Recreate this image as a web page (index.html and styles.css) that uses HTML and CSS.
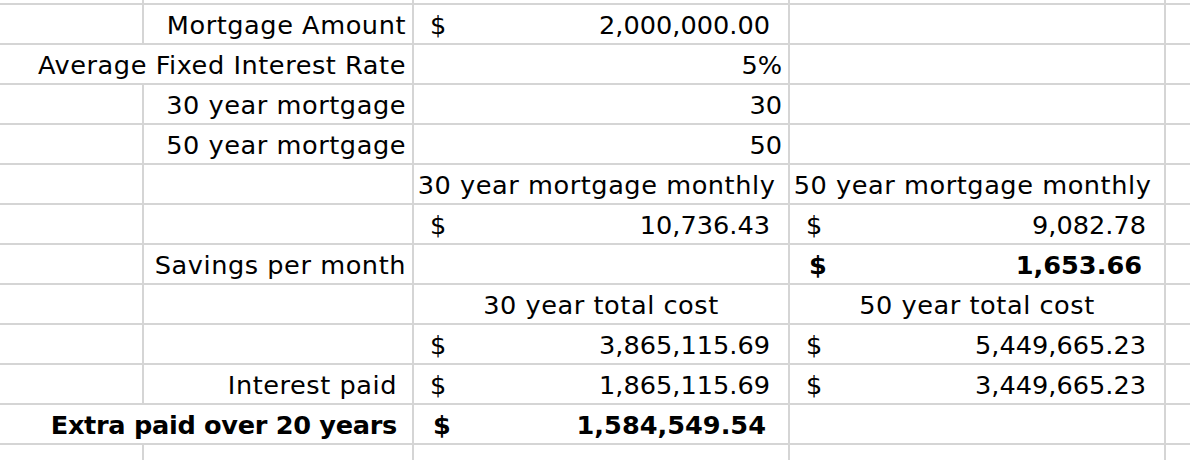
FILE: index.html
```html
<!DOCTYPE html>
<html>
<head>
<meta charset="utf-8">
<link rel="stylesheet" href="styles.css">
</head>
<body>
<div class="sheet">
  <div class="cell top"></div><div class="cell top"></div><div class="cell top"></div><div class="cell top"></div><div class="cell top last"></div>

  <div class="cell"></div>
  <div class="cell label">Mortgage Amount</div>
  <div class="cell acct"><span>$</span><span>2,000,000.00</span></div>
  <div class="cell"></div>
  <div class="cell last"></div>

  <div class="cell label span2">Average Fixed Interest Rate</div>
  <div class="cell num">5%</div>
  <div class="cell"></div>
  <div class="cell last"></div>

  <div class="cell"></div>
  <div class="cell label">30 year mortgage</div>
  <div class="cell num">30</div>
  <div class="cell"></div>
  <div class="cell last"></div>

  <div class="cell"></div>
  <div class="cell label">50 year mortgage</div>
  <div class="cell num">50</div>
  <div class="cell"></div>
  <div class="cell last"></div>

  <div class="cell"></div>
  <div class="cell"></div>
  <div class="cell center trail">30 year mortgage monthly</div>
  <div class="cell center trail">50 year mortgage monthly</div>
  <div class="cell last"></div>

  <div class="cell"></div>
  <div class="cell"></div>
  <div class="cell acct"><span>$</span><span>10,736.43</span></div>
  <div class="cell acct"><span>$</span><span>9,082.78</span></div>
  <div class="cell last"></div>

  <div class="cell"></div>
  <div class="cell label">Savings per month</div>
  <div class="cell"></div>
  <div class="cell acct bold"><span>$</span><span>1,653.66</span></div>
  <div class="cell last"></div>

  <div class="cell"></div>
  <div class="cell"></div>
  <div class="cell center">30 year total cost</div>
  <div class="cell center">50 year total cost</div>
  <div class="cell last"></div>

  <div class="cell"></div>
  <div class="cell"></div>
  <div class="cell acct"><span>$</span><span>3,865,115.69</span></div>
  <div class="cell acct"><span>$</span><span>5,449,665.23</span></div>
  <div class="cell last"></div>

  <div class="cell"></div>
  <div class="cell label trail-label">Interest paid</div>
  <div class="cell acct"><span>$</span><span>1,865,115.69</span></div>
  <div class="cell acct"><span>$</span><span>3,449,665.23</span></div>
  <div class="cell last"></div>

  <div class="cell label span2 bold trail-label">Extra paid over 20 years</div>
  <div class="cell acct bold"><span>$</span><span>1,584,549.54</span></div>
  <div class="cell"></div>
  <div class="cell last"></div>

  <div class="cell end"></div><div class="cell end"></div><div class="cell end"></div><div class="cell end"></div><div class="cell end last"></div>
</div>
</body>
</html>
```

FILE: styles.css
```css
html, body {
  margin: 0;
  padding: 0;
  background: #ffffff;
  overflow: hidden;
}

.sheet {
  display: grid;
  grid-template-columns: 144px 270px 376px 376px 1fr;
  grid-auto-rows: 40px;
  grid-template-rows: 5px;
  width: 1190px;
  height: 460px;
  font-family: "DejaVu Sans", Verdana, sans-serif;
  font-size: 25.6px;
  color: #000;
  overflow: hidden;
}

.cell {
  box-sizing: border-box;
  border-right: 2px solid #d5d5d5;
  border-bottom: 2px solid #d5d5d5;
  display: flex;
  align-items: flex-end;
  padding: 0 6px 4px 6px;
  line-height: 1;
  white-space: nowrap;
  min-width: 0;
}

.cell.last {
  border-right: none;
}

.cell.top {
  padding: 0;
}

.cell.end {
  border-bottom: none;
}

.label {
  justify-content: flex-end;
  letter-spacing: 0.55px;
}

.trail-label {
  padding-right: 15px;
}

.label.bold {
  letter-spacing: -0.3px;
}

.span2 {
  grid-column: span 2;
}

.num {
  justify-content: flex-end;
}

.center {
  justify-content: center;
  padding-left: 0;
  padding-right: 0;
  letter-spacing: 0.55px;
}

.center.trail {
  padding-right: 9px;
}

.acct {
  justify-content: space-between;
  padding-left: 16px;
  padding-right: 18px;
}

.bold {
  font-weight: bold;
}

.acct.bold {
  padding-left: 19px;
  padding-right: 22px;
}
```
